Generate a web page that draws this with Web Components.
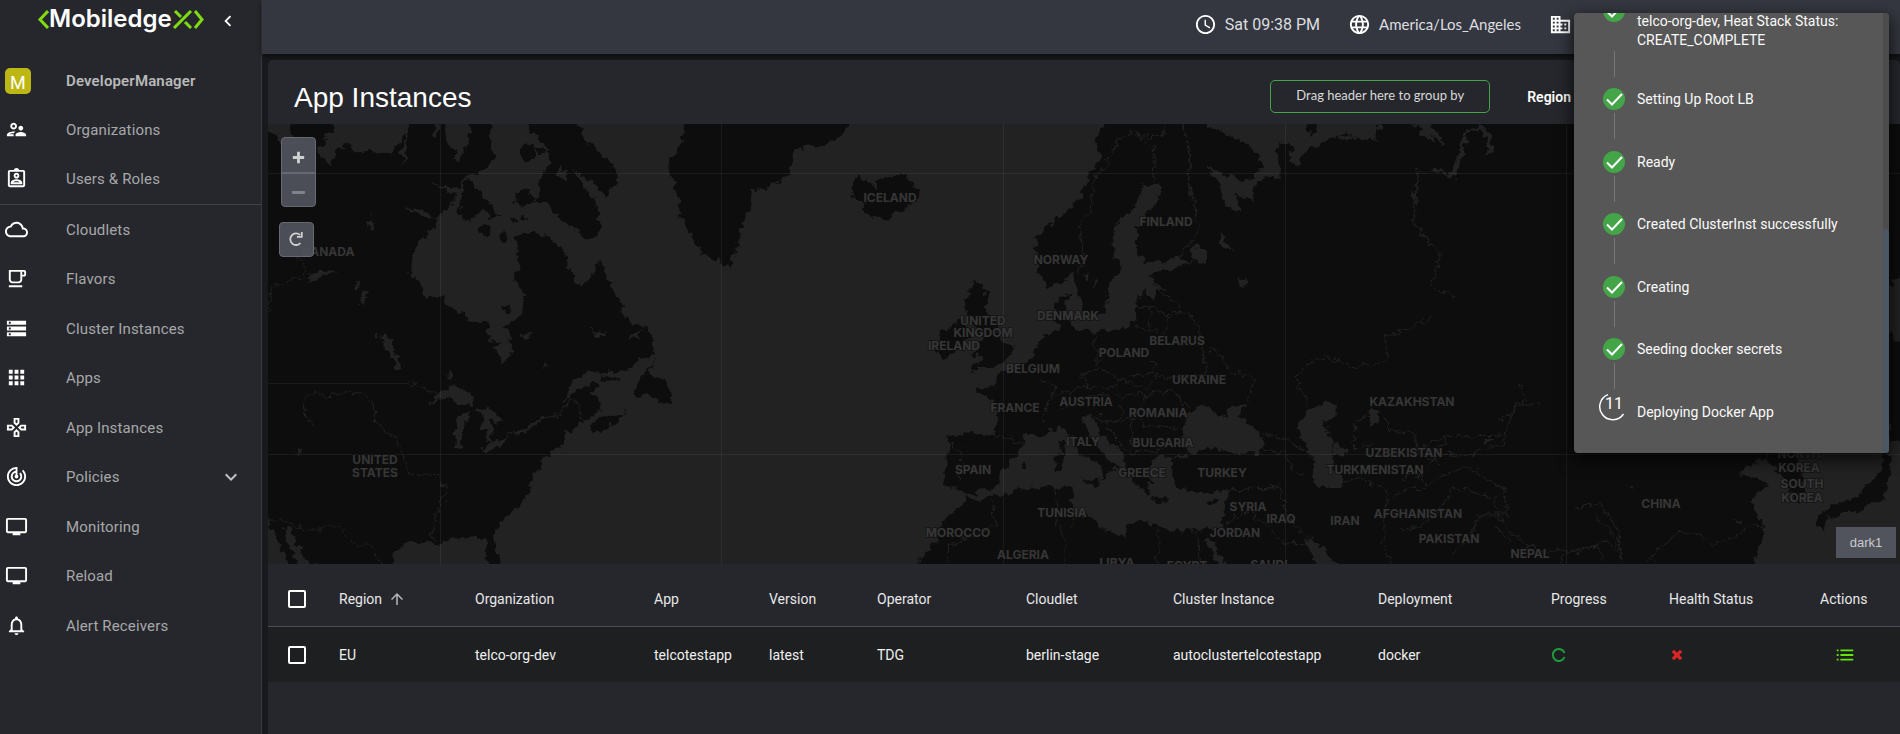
<!DOCTYPE html>
<html lang="en">
<head>
<meta charset="utf-8">
<title>App Instances</title>
<style>
  html, body { margin: 0; height: 100%; }
  body { background: #18191c; color: #fff; font-family: Roboto, "Liberation Sans", sans-serif; font-size: 14px; }
</style>
</head>
<body>
<console-app></console-app>
<script>
const ICONS = {
  orgs: 'M9 12c1.93 0 3.5-1.57 3.5-3.5S10.930 5 9 5 5.500 6.570 5.500 8.500 7.070 12 9 12zm0-5c.83 0 1.500.67 1.500 1.500S9.830 10 9 10s-1.500-.67-1.500-1.500S8.170 7 9 7zm.05 10H4.770c.99-.5 2.700-1 4.230-1 .11 0 .23.01.34.01.34-.73.93-1.330 1.640-1.810-.73-.13-1.420-.2-1.980-.2-2.340 0-7 1.170-7 3.500V19h7v-1.500c0-.17.02-.34.05-.5zM16.500 14.500c-1.840 0-5.500 1.010-5.500 3V19h11v-1.500c0-1.990-3.660-3-5.500-3zm1.210-1.820c.76-.43 1.290-1.240 1.290-2.180C19 9.120 17.880 8 16.500 8S14 9.120 14 10.500c0 .94.53 1.750 1.290 2.180.36.2.77.32 1.210.32s.85-.12 1.210-.32z',
  users: 'M19 3h-4.180C14.400 1.840 13.300 1 12 1s-2.400.84-2.820 2H5c-1.100 0-2 .9-2 2v14c0 1.100.9 2 2 2h14c1.100 0 2-.9 2-2V5c0-1.100-.9-2-2-2zm0 16H5V5h14v14zM12 6c-1.650 0-3 1.350-3 3s1.350 3 3 3 3-1.350 3-3-1.350-3-3-3zm0 4c-.55 0-1-.45-1-1s.45-1 1-1 1 .45 1 1-.45 1-1 1zM6 16.470V18h12v-1.530c0-2.500-3.970-3.580-6-3.580s-6 1.070-6 3.580zm2.310-.47c.69-.56 2.380-1.120 3.690-1.120s3.010.56 3.690 1.120H8.310z',
  cloud: 'M19.350 10.040C18.670 6.590 15.640 4 12 4 9.110 4 6.600 5.640 5.350 8.040 2.340 8.360 0 10.910 0 14c0 3.310 2.690 6 6 6h13c2.760 0 5-2.240 5-5 0-2.640-2.050-4.780-4.650-4.960zM19 18H6c-2.210 0-4-1.790-4-4 0-2.050 1.530-3.760 3.560-3.970l1.070-.11.5-.95C8.080 7.140 9.940 6 12 6c2.620 0 4.880 1.860 5.390 4.430l.3 1.500 1.530.11c1.560.1 2.780 1.410 2.780 2.960 0 1.650-1.350 3-3 3z',
  cup: 'M16 5v8c0 1.100-.9 2-2 2H8c-1.100 0-2-.9-2-2V5h10m4-2H4v10c0 2.210 1.790 4 4 4h6c2.210 0 4-1.790 4-4v-3h2c1.110 0 2-.9 2-2V5c0-1.110-.89-2-2-2zm-2 5V5h2v3h-2zm0 11H4v2h14v-2z',
  storage: 'M2 20h20v-4H2v4zm2-3h2v2H4v-2zM2 4v4h20V4H2zm4 3H4V5h2v2zm-4 7h20v-4H2v4zm2-3h2v2H4v-2z',
  apps: 'M4 8h4V4H4v4zm6 12h4v-4h-4v4zm-6 0h4v-4H4v4zm0-6h4v-4H4v4zm6 0h4v-4h-4v4zm6-10v4h4V4h-4zm-6 4h4V4h-4v4zm6 6h4v-4h-4v4zm0 6h4v-4h-4v4z',
  games: 'M13 4v2.670l-1 1-1-1V4h2m7 7v2h-2.670l-1-1 1-1H20M6.670 11l1 1-1 1H4v-2h2.670M12 16.330l1 1V20h-2v-2.670l1-1M15 2H9v5.500l3 3 3-3V2zm7 7h-5.500l-3 3 3 3H22V9zM7.500 9H2v6h5.500l3-3-3-3zm4.500 4.500l-3 3V22h6v-5.500l-3-3z',
  policy: 'M19.070 4.930l-1.410 1.410C19.100 7.790 20 9.790 20 12c0 4.420-3.580 8-8 8s-8-3.580-8-8c0-4.080 3.050-7.440 7-7.930v2.020C8.160 6.570 6 9.030 6 12c0 3.310 2.690 6 6 6s6-2.690 6-6c0-1.660-.67-3.160-1.760-4.240l-1.410 1.410C15.550 9.900 16 10.900 16 12c0 2.210-1.790 4-4 4s-4-1.790-4-4c0-1.860 1.280-3.410 3-3.860v2.140c-.6.35-1 .98-1 1.720 0 1.100.9 2 2 2s2-.9 2-2c0-.74-.4-1.380-1-1.720V2h-1C6.480 2 2 6.480 2 12s4.480 10 10 10 10-4.480 10-10c0-2.760-1.120-5.260-2.930-7.070z',
  tv: 'M21 3H3c-1.100 0-2 .9-2 2v12c0 1.100.9 2 2 2h5v2h8v-2h5c1.100 0 2-.9 2-2V5c0-1.100-.9-2-2-2zm0 14H3V5h18v12z',
  bell: 'M12 22c1.100 0 2-.9 2-2h-4c0 1.100.9 2 2 2zm6-6v-5c0-3.070-1.630-5.640-4.500-6.320V4c0-.83-.67-1.500-1.500-1.500s-1.500.67-1.500 1.500v.68C7.640 5.360 6 7.920 6 11v5l-2 2v1h16v-1l-2-2zm-2 1H8v-6c0-2.480 1.510-4.500 4-4.500s4 2.020 4 4.500v6z',
  down: 'M7.410 8.590L12 13.170l4.590-4.580L18 10l-6 6-6-6z',
  left: 'M15.410 7.410L14 6l-6 6 6 6 1.410-1.410L10.830 12z',
  clock: 'M11.990 2C6.470 2 2 6.480 2 12s4.470 10 9.990 10C17.520 22 22 17.520 22 12S17.520 2 11.990 2zM12 20c-4.420 0-8-3.580-8-8s3.580-8 8-8 8 3.580 8 8-3.580 8-8 8zm.5-13H11v6l5.250 3.150.75-1.230-4.500-2.670z',
  globe: 'M11.990 2C6.470 2 2 6.480 2 12s4.470 10 9.990 10C17.520 22 22 17.520 22 12S17.520 2 11.990 2zm6.930 6h-2.950c-.32-1.250-.78-2.450-1.380-3.560 1.840.63 3.370 1.910 4.330 3.560zM12 4.040c.83 1.200 1.480 2.530 1.910 3.960h-3.820c.43-1.430 1.080-2.760 1.910-3.960zM4.260 14C4.100 13.360 4 12.690 4 12s.1-1.360.26-2h3.380c-.08.66-.14 1.320-.14 2s.06 1.340.14 2H4.260zm.82 2h2.950c.32 1.250.78 2.450 1.380 3.560-1.840-.63-3.370-1.900-4.330-3.560zm2.950-8H5.080c.96-1.660 2.490-2.930 4.330-3.560C8.810 5.550 8.350 6.750 8.030 8zM12 19.960c-.83-1.200-1.480-2.530-1.910-3.960h3.820c-.43 1.430-1.080 2.760-1.910 3.960zM14.340 14H9.660c-.09-.66-.16-1.320-.16-2s.07-1.350.16-2h4.680c.09.65.16 1.320.16 2s-.07 1.340-.16 2zm.25 5.560c.6-1.110 1.060-2.310 1.380-3.560h2.950c-.96 1.650-2.490 2.930-4.330 3.560zM16.360 14c.08-.66.14-1.320.14-2s-.06-1.340-.14-2h3.380c.16.64.26 1.310.26 2s-.1 1.360-.26 2h-3.380z',
  building: 'M12 7V3H2v18h20V7H12zM6 19H4v-2h2v2zm0-4H4v-2h2v2zm0-4H4V9h2v2zm0-4H4V5h2v2zm4 12H8v-2h2v2zm0-4H8v-2h2v2zm0-4H8V9h2v2zm0-4H8V5h2v2zm10 12h-8v-2h2v-2h-2v-2h2v-2h-2V9h8v10zm-2-8h-2v2h2v-2zm0 4h-2v2h2v-2z',
  up: 'M4 12l1.410 1.410L11 7.830V20h2V7.830l5.580 5.590L20 12l-8-8-8 8z',
  list: 'M3 6h2v2H3zM7 6h14v2H7zM3 11h2v2H3zM7 11h14v2H7zM3 16h2v2H3zM7 16h14v2H7z',
  close: 'M7 3l5 5 5-5 4 4-5 5 5 5-4 4-5-5-5 5-4-4 5-5-5-5z',
  plus: 'M10 4h4v6h6v4h-6v6h-4v-6H4v-4h6z',
  minus: 'M3 10h18v4H3z'
};

function define(name, html, setup) {
  const tpl = document.createElement('template');
  tpl.innerHTML = html;
  customElements.define(name, class extends HTMLElement {
    connectedCallback() {
      if (this.shadowRoot) return;
      this.attachShadow({ mode: 'open' }).append(tpl.content.cloneNode(true));
      if (setup) setup(this, this.shadowRoot);
    }
  });
}

define('ui-icon', `
<style>
  :host { display: block; flex: none; width: 23px; height: 23px; }
  svg { display: block; width: 100%; height: 100%; fill: currentColor; }
</style>
<svg viewBox="0 0 24 24" aria-hidden="true"><path fill-rule="evenodd"/></svg>`,
(host, root) => root.querySelector('path').setAttribute('d', ICONS[host.getAttribute('name')]));

define('brand-logo', `
<style>
  :host { display: flex; align-items: center; font: 600 24px/32px Inter, sans-serif; color: #fff; }
  svg { display: block; height: 19px; fill: none; stroke: #7fdc12; stroke-width: 3; }
</style>
<svg width="12" viewBox="0 0 12 19" aria-hidden="true"><path d="M11 1L3 9.500 11 18"/></svg>
<span>Mobiledge</span>
<svg width="33" viewBox="0 0 33 19" aria-hidden="true"><path d="M2 18L19 1M3 1l6 6M13 12l6 6M23 1l7 8.500-7 8.500"/></svg>`);

define('nav-item', `
<style>
  :host { display: block; }
  a { display: flex; align-items: center; height: 49px; padding: 0 18px 0 5px; color: #a7a8aa; font-size: 15px; text-decoration: none; letter-spacing: .01em; }
  ui-icon { color: #fff; margin-right: 38px; }
  span { flex: 1; }
  .chev { color: #c0c1c3; margin: 0; width: 24px; height: 24px; }
</style>
<a href="#"><span><slot></slot></span></a>`,
(host, root) => {
  const link = root.querySelector('a');
  link.insertAdjacentHTML('afterbegin', `<ui-icon name="${host.getAttribute('icon')}"></ui-icon>`);
  if (host.hasAttribute('expandable')) link.insertAdjacentHTML('beforeend', '<ui-icon class="chev" name="down"></ui-icon>');
});

define('side-nav', `
<style>
  :host { display: block; flex: none; box-sizing: border-box; width: 262px; background: #26272c; border-right: 1px solid #38393e; }
  .top { display: flex; align-items: center; height: 42px; padding: 0 22px 0 37px; justify-content: space-between; }
  brand-logo { margin-bottom: 4px; }
  button { border: 0; background: none; color: #fff; padding: 0; }
  button ui-icon { width: 22px; height: 22px; }
  .user { display: flex; align-items: center; height: 49px; margin-top: 14px; padding-left: 5px; color: #b8b9ba; font-size: 15px; font-weight: 600; letter-spacing: .01em; }
  .avatar { width: 26px; height: 26px; margin-right: 35px; border-radius: 5px; background: #bdb714; color: #fff; font: 18px/29px Roboto, sans-serif; text-align: center; }
  .group + .group { border-top: 1px solid #414247; }
  nav-item:nth-child(even) { margin-bottom: 1px; }
</style>
<div class="top"><brand-logo></brand-logo><button aria-label="Collapse menu"><ui-icon name="left"></ui-icon></button></div>
<div class="user"><span class="avatar">M</span><span>DeveloperManager</span></div>
<nav>
  <div class="group">
    <nav-item icon="orgs">Organizations</nav-item>
    <nav-item icon="users">Users &amp; Roles</nav-item>
  </div>
  <div class="group">
    <nav-item icon="cloud">Cloudlets</nav-item>
    <nav-item icon="cup">Flavors</nav-item>
    <nav-item icon="storage">Cluster Instances</nav-item>
    <nav-item icon="apps">Apps</nav-item>
    <nav-item icon="games">App Instances</nav-item>
    <nav-item icon="policy" expandable>Policies</nav-item>
    <nav-item icon="tv">Monitoring</nav-item>
    <nav-item icon="tv">Reload</nav-item>
    <nav-item icon="bell">Alert Receivers</nav-item>
  </div>
</nav>`);

define('top-bar', `
<style>
  :host { display: flex; flex: none; align-items: center; justify-content: flex-end; height: 54px; padding: 0 328px 6px 0; box-sizing: border-box; background: #34373f; box-shadow: 0 2px 5px #0008; }
  div { display: flex; align-items: center; gap: 8px; margin-left: 28px; font-size: 16px; color: #dddee0; }
  ui-icon { color: #fff; }
  .zone { font-family: Lato, sans-serif; font-size: 15px; }
</style>
<div><ui-icon name="clock"></ui-icon><span>Sat 09:38 PM</span></div>
<div class="zone"><ui-icon name="globe"></ui-icon><span>America/Los_Angeles</span></div>
<div><ui-icon name="building"></ui-icon></div>`);

define('panel-head', `
<style>
  :host { display: flex; flex: none; align-items: center; height: 64px; box-sizing: border-box; padding: 0 329px 0 26px; background: #26272c; border-radius: 5px 5px 0 0; }
  h1 { flex: 1; margin: 12px 0 0; font: 400 28px/36px "Liberation Sans", Arial, sans-serif; }
  .drop { box-sizing: border-box; width: 220px; height: 33px; margin-top: 8px; border: 1px solid #43a54a; border-radius: 5px; color: #d8d9da; font: 13px/28px Lato, sans-serif; text-align: center; }
  .region { margin: 9px 0 0 37px; font-weight: 600; font-size: 14px; }
</style>
<h1>App Instances</h1>
<div class="drop">Drag header here to group by</div>
<div class="region">Region</div>`);

/* [label, x, y] on the map canvas */
const LABELS = [['CANADA',60,127],['UNITED',107,335],['STATES',107,348],['ICELAND',622,73],['FINLAND',898,97],['NORWAY',793,135],['DENMARK',800,191],['UNITED',715,196],['KINGDOM',715,208],['IRELAND',686,221],['BELARUS',909,216],['POLAND',856,228],['BELGIUM',765,244],['UKRAINE',931,255],['AUSTRIA',818,277],['FRANCE',747,283],['ROMANIA',890,288],['KAZAKHSTAN',1144,277],['ITALY',815,317],['BULGARIA',895,318],['UZBEKISTAN',1136,328],['SPAIN',705,345],['GREECE',874,348],['TURKEY',954,348],['TURKMENISTAN',1107,345],['SYRIA',980,382],['TUNISIA',794,388],['IRAQ',1013,394],['IRAN',1077,396],['AFGHANISTAN',1150,389],['JORDAN',967,408],['MOROCCO',690,408],['PAKISTAN',1181,414],['ALGERIA',755,430],['NEPAL',1262,429],['LIBYA',849,438],['EGYPT',919,441],['SAUDI',1001,440],['CHINA',1393,379],['NORTH',1531,329],['KOREA',1531,343],['SOUTH',1534,359],['KOREA',1534,373]];

define('map-view', `
<style>
  :host { display: block; flex: none; position: relative; height: 440px; overflow: hidden; background: #222; }
  .map { display: block; width: 100%; height: 100%; }
  .land { fill: #0d0d0d; }
  .sea { fill: #222; }
  .lines path { fill: none; stroke: #222; stroke-width: 1; vector-effect: non-scaling-stroke; }
  .river { fill: none; stroke: #222; stroke-width: 9; }
  .grid { stroke: #fff; stroke-opacity: .06; fill: none; }
  text { font: 700 12px Inter, sans-serif; fill: #363636; stroke: #101010; stroke-width: 2; stroke-opacity: .6; paint-order: stroke; text-anchor: middle; dominant-baseline: central; }
  .controls { position: absolute; left: 11px; top: 13px; display: flex; flex-direction: column; gap: 15px; }
  .zoom { display: flex; flex-direction: column; margin-left: 2px; box-sizing: border-box; width: 35px; border: 1px solid #666972; border-radius: 4px; background: #51545deb; }
  button { display: flex; align-items: center; justify-content: center; box-sizing: border-box; width: 100%; height: 34px; margin: 0; padding: 0; border: 0; background: none; color: #d0d0d0; }
  .zoom button { padding-top: 4px; }
  .zoom button + button { color: #85868a; border-top: 2px solid #666972; }
  .zoom ui-icon { width: 17px; height: 17px; }
  .reload { width: 35px; height: 35px; border: 1px solid #666972; border-radius: 4px; background: #51545deb; }
  .reload svg { width: 16px; height: 16px; margin: 0 2px 2px 0; fill: none; stroke: #d0d0d0; stroke-width: 2; }
  .theme { position: absolute; right: 4px; bottom: 6px; width: 60px; height: 31px; background: #51545d; color: #c9cacc; font: 13px "Liberation Sans", sans-serif; }
</style>
<svg class="map" viewBox="0 0 1632 440" preserveAspectRatio="xMidYMid slice" role="img" aria-label="World map">
  <defs><filter id="coast" x="0" y="0" width="1632" height="440" filterUnits="userSpaceOnUse" color-interpolation-filters="sRGB">
    <feTurbulence type="fractalNoise" baseFrequency=".13" numOctaves="3" seed="4"/>
    <feDisplacementMap in="SourceGraphic" scale="11" xChannelSelector="R" yChannelSelector="G"/>
  </filter></defs>
  <g filter="url(#coast)">
    <path class="sea" d="M-20-20H1660V460H-20z"/>
    <g transform="translate(-8 -4) scale(.3827 .3333)">
      <g class="land">
        <path d="M-40-40H605L600 60 612 110 590 150 540 165 520 210 490 270 455 300 460 320 430 340 400 400 392 470 418 480 432 538 470 532 520 575 550 600 595 602 600 670 640 725 657 700 655 660 640 617 680 590 692 550 688 510 660 482 678 440 668 400 665 345 700 340 740 342 800 395 805 450 838 498 870 465 886 420 910 480 940 550 960 600 1000 625 1030 660 1030 700 985 725 960 752 860 755 820 785 790 845 830 810 880 783 890 800 860 820 885 840 890 870 850 905 800 935 785 980 735 1015 725 1050 700 1100 705 1130 650 1180 615 1225 612 1270 640 1370H605L590 1270 575 1250 540 1255 500 1250 480 1268 440 1272 390 1268 350 1300 345 1370H180L120 1320 95 1260 80 1225 62 1225 75 1280 120 1370H90L50 1270 20 1190H-40z"/>
        <path d="M690-40H815L850 60 900 110 940 155 925 200 905 230 870 190 820 150 855 215 885 270 888 340 860 360 820 330 780 290 740 245 710 250 735 212 728 175 762 125 745 70 700 30z"/>
        <path d="M538 178L575 215 600 250 627 285 610 295 580 268 548 305 518 280z"/>
        <path d="M1115-40L1100 80 1070 130 1065 160 1085 200 1100 290 1130 350 1155 400 1225 438 1245 400 1255 330 1280 270 1285 210 1330 200 1380 160 1400 100 1420 70 1460 80 1520 50 1560-40z"/>
        <path d="M1035 715L1015 760 1060 785 1080 850 1045 845 1030 825 970 828 1000 770zM862 915L885 895 945 885 960 865 940 905 870 940zM885 762L930 775 935 788 910 785z"/>
        <ellipse cx="698" cy="97" rx="19" ry="27"/><ellipse cx="688" cy="236" rx="24" ry="24"/><ellipse cx="588" cy="330" rx="14" ry="16"/><ellipse cx="640" cy="353" rx="8" ry="16"/><ellipse cx="735" cy="90" rx="12" ry="9"/><ellipse cx="645" cy="568" rx="10" ry="12"/><ellipse cx="665" cy="300" rx="8" ry="6"/><ellipse cx="686" cy="292" rx="6" ry="6"/><ellipse cx="612" cy="672" rx="10" ry="8"/>
      </g>
      <g class="sea">
        <path d="M-40-40H85L80 40 110 60 70 90 40 40-40 40zM185-40H400L370 60 340 100 300 92 260 100 225 70 200 90 185 145 165 120 150 90 185 55 160 60 190 30zM480-40H545L548 60 520 125 500 90 485 40zM365-40H400L385 60 378 130 365 100 380 60zM455-20h10v70h-10z"/>
        <path d="M780 135L805 155 795 180 775 165zM370 262L420 270 460 300 430 290zM448 185L490 200 530 215 500 220zM275 300l20-10 5 20-10 20zM125 475l30-25 50 8-45 10-30 18zM250 490l10-5-5 25zM260 555l10-45 12 5-10 40zM320 650l15-8 20 50 15 55-10 3-15-40-20-30zM300 650l8-20 5 30zM490 755h12v25h-12zM675 650l40-15-10 15 10 5zM855 610l20 25 35 0-30 20zM960 660l45-32-20 25zM735 750l10-25 8 3zM95 985l15 25-10-3z"/>
        <path d="M440 855L470 820 505 795 540 800 560 855 520 850 490 830zM515 985L508 920 525 880 555 870 545 885 530 930 528 980zM560 870L600 865 635 905 615 905 595 890 610 930 600 965 590 965 592 935 575 925 590 890zM580 985L600 968 652 950 640 970 600 992zM640 942L690 925 740 890 745 895 690 940z"/>
      </g>
      <g class="lines">
        <path d="M20 575l10-75 35-10 50-20 5-20-30-50M390 790l50 25 35 5M115 840l25-20 40 10 50-15 40 5 25 25 5 60 60 55 15 60 15 35 80 15 20 45-30 60-10 80 15 30M115 840l5 60 20 15M20 1200h40l60 30h50l0-10h35l50 60 25-15 40 70M740 890h40l30-50 20 5 5 45 20 15"/>
      </g>
    </g>
    <g transform="translate(582 -4) scale(.3827 .3333)">
      <g class="land">
        <path d="M5 205L20 165 50 185 70 205 75 180 140 160 160 180 178 215 165 250 95 298 30 275 40 255 10 235z"/>
        <path d="M320 490L350 485 345 515 370 520 350 570 380 610 400 670 430 680 415 720 370 735 312 757 345 715 318 700 352 660 335 630 308 595 300 540zM240 630L290 600 315 640 290 690 240 715 230 690z"/>
        <path d="M690-40L640 60 655 110 630 160 600 230 560 280 520 320 485 350 490 400 490 460 520 503 550 490 580 460 600 530 610 585 640 590 665 570 675 490 715 440 690 410 685 350 700 310 745 260 765 195 812 195 812 230 785 270 750 320 750 400 770 430 830 420 870 410 895 430 830 450 790 460 790 490 830 505 800 510 792 540 770 510 750 530 745 600 720 625 640 635 590 628 570 600 560 560 578 515 540 540 535 590 550 630 500 655 470 720 420 750 380 765 375 795 330 800 330 820 375 840 385 880 378 945 300 940 255 940 258 1000 245 1095 285 1110 308 1125 345 1110 380 1105 400 1050 450 980 460 945 510 945 545 920 570 940 600 1000 650 1030 665 1060 650 1100 680 1055 700 1040 665 1010 620 940 605 890 630 885 655 940 715 1000 720 1040 740 1090 780 1120 790 1080 770 1050 800 1010 840 1010 850 1100 900 1115 940 1120 990 1110 985 1170 965 1225 910 1230 870 1235 800 1220 760 1195 725 1215 720 1250 660 1230 640 1200 590 1180 575 1150 585 1100 540 1100 450 1105 380 1130 320 1140 302 1135 280 1170 245 1200 230 1260 190 1310 160 1370H2900V-40z"/>
        <path d="M605 1075h45v25zM540 1005l20-5-5 50h-15zM545 960h12v35h-8zM785 1135h45v10h-35zM930 1150l35-18-12 20-15 5zM448 1040h14v-8h-10z"/>
      </g>
      <g class="sea">
        <path d="M885-40L930 12 1000 50 1060 90 1078 130 1060 175 1010 178 930 140 965 190 975 240 1010 278 1020 255 1000 215 1055 245 1055 200 1085 165 1120 180 1118 60 1160 80 1140 120 1175 140 1185 100 1260 50 1300 40 1370 65 1395-40zM1445-40L1475 20 1525 70 1515-40z"/>
        <path d="M930 850L950 880 985 890 975 870 1040 845 1010 890 1060 930 1085 970 1075 1000 1010 1000 950 980 900 1000 865 985 870 930 890 870zM1240 848L1270 850 1268 890 1235 900 1262 960 1270 1010 1255 1040 1285 1070 1280 1105 1230 1100 1205 1080 1215 1020 1180 960 1170 910 1200 870z"/>
        <path d="M925 1255L945 1290 975 1370H1000L970 1310 945 1260zM1190 1255L1215 1260 1250 1310 1300 1370H1230zM900 370L935 400 930 430 900 425 890 395zM965 330L990 370 995 395 970 375zM610 465L630 455 620 490zM635 485l12-5-8 30zM1010 470l25 10-5 20zM840 1015l40-12-5 12-30 5zM1270 970l25 25-10 15-20-10zM1355 890l10-30 15 30 0 25-10-10-5 10z"/>
      </g>
      <ellipse class="land" cx="1207" cy="25" rx="16" ry="17"/>
      <g class="lines">
        <path d="M740 30l-40 30-25 65-35 55-10 90-30 40 10 100-10 60M740 30l50 50 5 110M740 30l40 25 40-10 5-35M870 15l20 100-10 40 20 130 15 30-20 50-35 45M795 500l60 50 5 20M750 565l40-5 45 30-20 50-30-10-35-10M835 590l30-15 40 20 10 70 20 100-100 10-45-15-60 10M790 720l5 60-25 30-60-30-60-40M635 635l15 110-45 20 20 40 55 0 25-25M780 630l10-60M940 695l20-5 30 60 65 25-10 65M500 780l35 15-10 40-25 50 15 35M535 830l60-30 30 0M550 870l60-40 60-5 40 5 0 60-30 20-50-30M710 830l70-10 60-10 45 60M780 820l-30 50 20 50 110 10M735 990l0-90-65 0 15 40 45 60 70-10 30-10M380 945l70 25M260 975l35 15-10 100M375 1140l5 70-60 40-60 20v60M540 1105v100l20 40 0 120M560 1240l30-50M805 1225v130M910 1230v120M990 1110l100-5 30-10 20 80 40 70M1050 935l80 20 60 40M1080 990l60 10 20 60 30 0M1285 1090l50-15 70 40-10 150 30 100M1405 1140l60-40 40 10M985 1210l60-40 90 100 80-5M1170 800l-5-30 20-30 60-30 60 30 80-5 20-25-5-60 70-30 50-30M1170 800l30 50M1318 995v-95l70-20M1318 995l50-25M1390 890l25 45 60 5 5 50 60 40M1480 150l-10 160 70 90-20 100 60 30"/>
      </g>
    </g>
    <g transform="translate(892 -124) scale(.4719 .3333)">
      <path class="river" d="M560 360L600 430M620 530L640 450 650 390 680 385 698 410 700 462M580 510l40 18M470 380l-30 30-60 5"/>
      <g class="lines"><path d="M585 510l-40 15-5 90 0 60 40 60M50 380l15 110-5 60 15 60M540 380l40 50"/></g>
    </g>
    <g transform="translate(1132 256) scale(.3333)">
      <path class="sea" d="M1090 190L1100 230 1060 250 1020 275 1050 290 1110 315 1080 330 1050 365 1080 420 1098 445 1070 520 1050 600H1560V183H1470V120z"/>
      <path class="sea" d="M1460-240L1480-300 1560-320V-100L1480-120 1460-160z"/>
      <g class="land">
        <path d="M1095 235L1130 190 1180 210 1210 290 1215 360 1190 378 1175 340 1160 310 1150 290z"/>
        <path d="M1440 180L1475 240 1465 300 1450 360 1395 370 1370 400 1335 395 1290 410 1270 395 1340 360 1375 350 1400 310 1440 285 1450 240zM1250 400L1285 400 1272 450 1255 440zM1295 400l30-5-10 20z"/>
      </g>
      <g class="lines"><path d="M0 290h60l20 30 60-40 60-20 110 65 15 80-90 0-20 60-60 60M80 260l40-40-50-20 70-30 170-5M140 170l-30 50 90 10 110-40 15-60 25-60 70 5M200 330l-50-10-20 60-70 60-60 10M200 330l80 25 20 70 50 50 60 35 120 0 60-15 20 40M315 360l0-20 5 35zM330 475l-40-30M480 550l20-30 60-10 60-30 45 60M520 380l80 0 50 60 20 120M580 405l60 60 30 80M740 560l40-60 60-40 60 5 40 30 60-25 60-35 40 10M360 10l20 50-80 60"/></g>
      <path class="sea" d="M245 185l30-6 5 10-30 3zM685 318l16 5-5 8zM340 85l10 12-8 2zM1000 415l20 5-10 8z"/>
    </g>
  </g>
  <path class="grid" d="M0 49.500H1632M0 330.500H1632M0 259.500H140M172.500 0V440M453.500 0V440M735.500 0V440M1017.500 0V440M1298.500 0V440"/>
  <g class="labels"></g>
</svg>
<div class="controls">
  <div class="zoom"><button aria-label="Zoom in"><ui-icon name="plus"></ui-icon></button><button aria-label="Zoom out" disabled><ui-icon name="minus"></ui-icon></button></div>
  <button class="reload" aria-label="Refresh map"><svg viewBox="0 0 18 18"><path d="M14 13.500A6.500 6.500 0 1 1 13.500 4.500M15.500 1V6.500H10"/></svg></button>
</div>
<button class="theme">dark1</button>`,
(host, root) => {
  const g = root.querySelector('.labels');
  for (const [label, x, y] of LABELS) {
    const t = document.createElementNS('http://www.w3.org/2000/svg', 'text');
    t.setAttribute('x', x); t.setAttribute('y', y); t.textContent = label;
    g.append(t);
  }
});

define('instance-table', `
<style>
  :host { display: block; }
  table { width: 100%; table-layout: fixed; border-collapse: collapse; font-size: 14px; }
  th { height: 54px; padding: 8px 0 0; font-weight: 400; text-align: left; color: #e8e8e8; border-bottom: 1px solid #4c4d50; white-space: nowrap; }
  td { height: 55px; padding: 0; background: #1e1f21; color: #f0f0f0; white-space: nowrap; }
  input { appearance: none; display: block; box-sizing: border-box; width: 18px; height: 18px; margin: 0 0 0 20px; border: 2px solid #fff; border-radius: 2px; }
  .sort { display: flex; align-items: center; gap: 6px; }
  .sort ui-icon { width: 18px; height: 18px; color: #b8b9ba; }
  .spin { display: block; width: 16px; height: 16px; fill: none; stroke: #1f9a3c; stroke-width: 2; }
  .bad { width: 14px; height: 14px; margin-left: 1px; color: #dc2626; }
  button { display: block; margin: 0 0 0 14px; padding: 0; border: 0; background: none; color: #5fe80c; }
  button ui-icon { width: 22px; height: 22px; }
</style>
<table>
  <colgroup><col style="width:71px"><col style="width:136px"><col style="width:179px"><col style="width:115px"><col style="width:108px"><col style="width:149px"><col style="width:147px"><col style="width:205px"><col style="width:173px"><col style="width:118px"><col style="width:151px"><col style="width:80px"></colgroup>
  <thead><tr>
    <th><input type="checkbox" aria-label="Select all"></th>
    <th><span class="sort">Region <ui-icon name="up"></ui-icon></span></th>
    <th>Organization</th><th>App</th><th>Version</th><th>Operator</th><th>Cloudlet</th><th>Cluster Instance</th><th>Deployment</th><th>Progress</th><th>Health Status</th><th>Actions</th>
  </tr></thead>
  <tbody><tr>
    <td><input type="checkbox" aria-label="Select row"></td>
    <td>EU</td><td>telco-org-dev</td><td>telcotestapp</td><td>latest</td><td>TDG</td><td>berlin-stage</td><td>autoclustertelcotestapp</td><td>docker</td>
    <td><svg class="spin" viewBox="0 0 16 16"><path d="M13.500 6A6 6 0 1 0 13.500 10"/></svg></td>
    <td><ui-icon class="bad" name="close"></ui-icon></td>
    <td><button aria-label="Actions"><ui-icon name="list"></ui-icon></button></td>
  </tr></tbody>
</table>`);

define('progress-step', `
<style>
  :host { display: block; }
  .row { display: flex; align-items: center; gap: 12px; height: 22px; }
  :host([multiline]) .row { height: 48px; align-items: flex-start; }
  :host([multiline]) .label { padding-top: 12px; }
  .mark { flex: none; width: 22px; height: 22px; }
  .mark svg { display: block; width: 22px; height: 22px; }
  .label { flex: 1; font-size: 14px; line-height: 19px; color: #fafafa; }
  .line { width: 1px; height: 26px; margin: 3px 0 12px 11px; background: #777; }
  :host(:nth-child(even)) .line { margin-bottom: 11px; }
  .count { position: relative; display: none; align-self: flex-start; width: 22px; height: 22px; margin-top: -5px; font-size: 16px; line-height: 16px; text-align: center; }
  .count svg { position: absolute; left: -5px; top: -3px; width: 28px; height: 28px; }
  :host([busy]) .line, :host([busy]) .mark { display: none; }
  :host([busy]) .count { display: block; }
</style>
<div class="row">
  <span class="mark"><svg viewBox="0 0 22 22"><circle cx="11" cy="11" r="11" fill="#43a548"/><path d="M4 11.500l5 5L19 6" fill="none" stroke="#fff" stroke-width="2"/></svg></span>
  <span class="count"></span>
  <span class="label"><slot></slot></span>
</div>
<div class="line"></div>`,
(host, root) => {
  if (host.hasAttribute('busy')) root.querySelector('.count').innerHTML = host.getAttribute('busy') + '<svg viewBox="0 0 28 28"><path d="M10 1.600A13 13 0 1 0 25.500 21" fill="none" stroke="#fff" stroke-width="1.500"/></svg>';
});

define('progress-panel', `
<style>
  :host { position: absolute; z-index: 2; top: 13px; right: 11px; box-sizing: border-box; width: 315px; height: 440px; padding: 0 30px 30px 29px; display: flex; flex-direction: column; justify-content: flex-end; overflow: hidden; border-radius: 4px; background: #575757; box-shadow: 0 6px 16px 2px #000a; }
  .track { position: absolute; right: 0; top: 0; bottom: 0; width: 6px; background: #4c4c4c; }
  .thumb { position: absolute; left: 0; right: 0; top: 49%; bottom: 0; border-radius: 3px 3px 0 0; background: #4b5763; }
</style>
<progress-step multiline>telco-org-dev, Heat Stack Status: CREATE_COMPLETE</progress-step>
<progress-step>Setting Up Root LB</progress-step>
<progress-step>Ready</progress-step>
<progress-step>Created ClusterInst successfully</progress-step>
<progress-step>Creating</progress-step>
<progress-step>Seeding docker secrets</progress-step>
<progress-step busy="11">Deploying Docker App</progress-step>
<div class="track"><div class="thumb"></div></div>`);

define('console-app', `
<style>
  :host { display: flex; position: relative; min-height: 100%; overflow: hidden; }
  main { flex: 1; min-width: 0; display: flex; flex-direction: column; }
  section { flex: 1; margin: 6px 0 0 6px; display: flex; flex-direction: column; background: #26272c; border-radius: 5px 5px 0 0; }
</style>
<side-nav></side-nav>
<main>
  <top-bar></top-bar>
  <section>
    <panel-head></panel-head>
    <map-view></map-view>
    <instance-table></instance-table>
  </section>
</main>
<progress-panel></progress-panel>`);
</script>
</body>
</html>
